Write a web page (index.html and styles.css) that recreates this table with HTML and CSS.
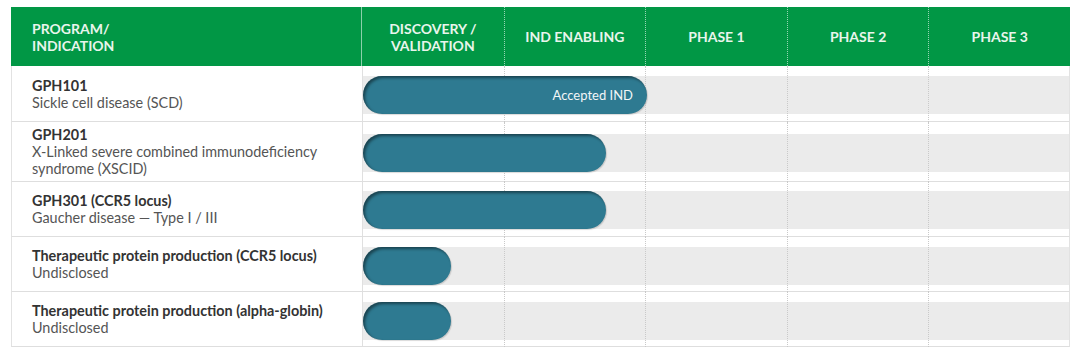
FILE: index.html
```html
<!DOCTYPE html>
<html>
<head>
<meta charset="utf-8">
<link rel="stylesheet" href="styles.css">
</head>
<body>
<div class="pipeline">
  <div class="head">
    <div class="hcell hprog">PROGRAM/<br>INDICATION</div>
    <div class="hphases">
      <div class="hcell hphase">DISCOVERY /<br>VALIDATION</div>
      <div class="hcell hphase">IND ENABLING</div>
      <div class="hcell hphase">PHASE 1</div>
      <div class="hcell hphase">PHASE 2</div>
      <div class="hcell hphase">PHASE 3</div>
    </div>
  </div>

  <div class="row first">
    <div class="prog"><b>GPH101</b><span>Sickle cell disease (SCD)</span></div>
    <div class="lane">
      <div class="grid"><i></i><i></i><i></i><i></i><i></i></div>
      <div class="track"><div class="bar" style="width:284px"><span class="label">Accepted IND</span></div></div>
    </div>
  </div>

  <div class="row tall">
    <div class="prog"><b>GPH201</b><span>X-Linked severe combined immunodeficiency<br>syndrome (XSCID)</span></div>
    <div class="lane">
      <div class="grid"><i></i><i></i><i></i><i></i><i></i></div>
      <div class="track"><div class="bar" style="width:243px"></div></div>
    </div>
  </div>

  <div class="row">
    <div class="prog"><b>GPH301 (CCR5 locus)</b><span>Gaucher disease — Type I / III</span></div>
    <div class="lane">
      <div class="grid"><i></i><i></i><i></i><i></i><i></i></div>
      <div class="track"><div class="bar" style="width:243px"></div></div>
    </div>
  </div>

  <div class="row">
    <div class="prog"><b>Therapeutic protein production (CCR5 locus)</b><span>Undisclosed</span></div>
    <div class="lane low">
      <div class="grid"><i></i><i></i><i></i><i></i><i></i></div>
      <div class="track"><div class="bar" style="width:88px"></div></div>
    </div>
  </div>

  <div class="row">
    <div class="prog"><b>Therapeutic protein production (alpha-globin)</b><span>Undisclosed</span></div>
    <div class="lane low">
      <div class="grid"><i></i><i></i><i></i><i></i><i></i></div>
      <div class="track"><div class="bar" style="width:88px"></div></div>
    </div>
  </div>
</div>
</body>
</html>
```

FILE: styles.css
```css
html, body {
  margin: 0;
  padding: 0;
  background: #ffffff;
}
body {
  padding: 7px 0 0 11px;
  font-family: Lato, "Open Sans", "Liberation Sans", sans-serif;
}
.pipeline {
  width: 1059px;
}
.head {
  display: grid;
  grid-template-columns: 351px 1fr;
  height: 59px;
  background: #019745;
  color: #e9f5ec;
  font-weight: 700;
  font-size: 14px;
  line-height: 17px;
}
.hcell {
  display: flex;
  align-items: center;
}
.hprog {
  padding-left: 21px;
  border-right: 1px solid rgba(255,255,255,0.55);
}
.hphases {
  display: grid;
  grid-template-columns: repeat(5, 1fr);
}
.hphase {
  justify-content: center;
  text-align: center;
}
.hphase + .hphase {
  border-left: 1px dotted rgba(255,255,255,0.6);
}
.row {
  display: grid;
  grid-template-columns: 351px 1fr;
  height: 55px;
  border-bottom: 1px solid #dedede;
  box-sizing: border-box;
  border-left: 1px solid #e2e2e2;
  border-right: 1px solid #e2e2e2;
}
.row.first {
  height: 56px;
}
.row.tall {
  height: 60px;
}
.prog {
  display: flex;
  flex-direction: column;
  justify-content: center;
  padding-left: 20px;
  border-right: 1px solid #e0e0e0;
  font-size: 14.4px;
  line-height: 17px;
  color: #555555;
}
.prog b {
  color: #333333;
  font-weight: 700;
}
.lane {
  position: relative;
  display: flex;
  align-items: center;
  padding-top: 2px;
}
.lane.low {
  padding-top: 4px;
}
.grid {
  position: absolute;
  inset: 0 0 -1px 0;
  display: grid;
  grid-template-columns: repeat(5, 1fr);
  z-index: 1;
  pointer-events: none;
}
.grid i + i {
  border-left: 1px dotted #c9c9c9;
}
.track {
  width: 100%;
  height: 38px;
  background: #ebebeb;
  display: flex;
}
.bar {
  position: relative;
  z-index: 2;
  height: 38px;
  border-radius: 19px;
  background: #2e7a91;
  box-shadow: inset 2px 2px 3px rgba(0,0,0,0.45), 1px 1px 1px rgba(0,0,0,0.15);
  display: flex;
  align-items: center;
  justify-content: flex-end;
  box-sizing: border-box;
  padding-right: 14px;
}
.label {
  color: #f2f6f8;
  font-size: 13px;
}
```
